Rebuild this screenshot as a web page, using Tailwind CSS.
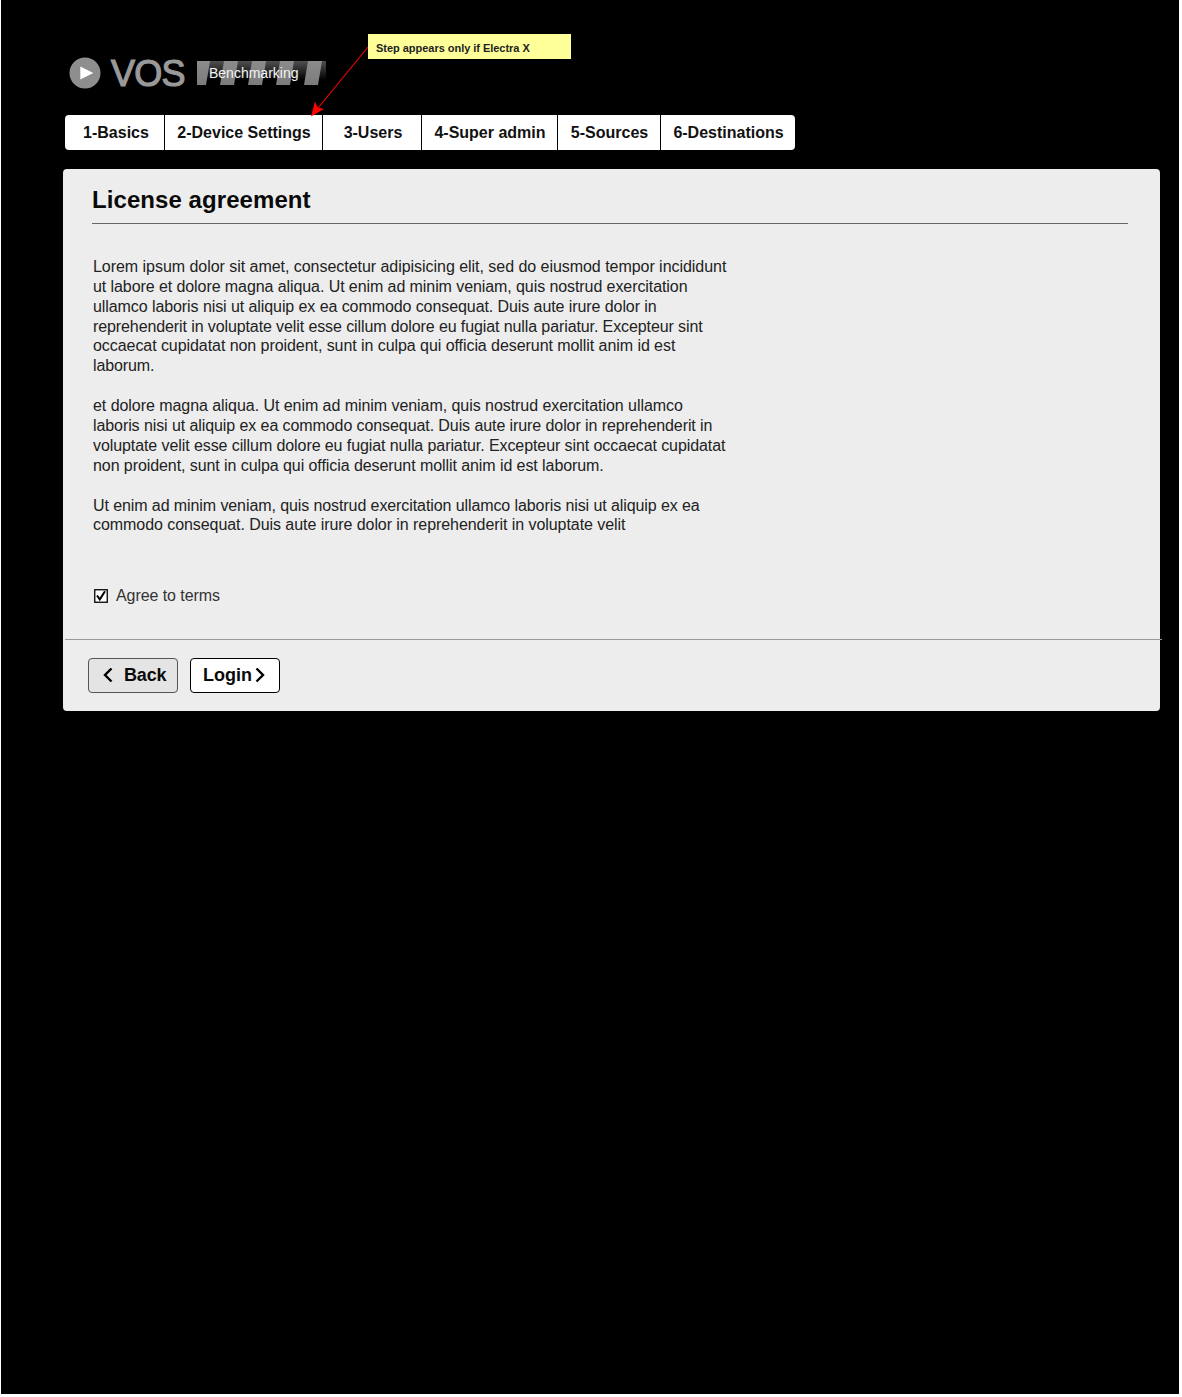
<!DOCTYPE html>
<html lang="en">
<head>
<meta charset="utf-8">
<title>VOS Benchmarking</title>
<script src="https://cdn.jsdelivr.net/npm/@tailwindcss/browser@4"></script>
</head>
<body class="bg-white font-['Liberation_Sans',Arial,sans-serif]">
<div class="relative ml-px h-[1394px] w-[1178px] bg-black pl-[62px] pt-[57px]">
  <header class="flex h-8 items-center pl-[6px]">
    <svg class="size-8" viewBox="0 0 32 32"><circle cx="16" cy="16" r="15.5" fill="#8e8e8e"/><path d="M11.3 9.4v13.2l13-6.6z" fill="#fff"/></svg>
    <div class="ml-[10px] w-[86px] pt-[2px] text-[36px] leading-8 tracking-[-0.8px] text-[#999] [-webkit-text-stroke:1.2px_#999]">VOS</div>
    <div class="relative h-6 w-[129px]">
      <svg class="absolute inset-0" width="129" height="24" viewBox="0 0 129 24">
        <defs><linearGradient id="bg" x1="0" y1="0" x2="0" y2="1"><stop offset="0" stop-color="#505050"/><stop offset=".8" stop-color="#000"/></linearGradient>
        <linearGradient id="st" x1="0" y1="0" x2="0" y2="1"><stop offset="0" stop-color="#8c8c8c"/><stop offset="1" stop-color="#7b7b7b"/></linearGradient></defs>
        <rect width="129" height="24" fill="url(#bg)"/>
        <g fill="url(#st)"><path d="M0 0h13L9 24H0z"/><path d="M27 0h14l-4 24H23z"/><path d="M55 0h14l-4 24H51z"/><path d="M83 0h14l-4 24H79z"/><path d="M111 0h14l-4 24h-14z"/></g>
      </svg>
      <span class="absolute left-3 top-0 text-[14px] leading-6 text-[#f4f4f4]">Benchmarking</span>
    </div>
  </header>

  <nav class="ml-[2px] mt-[26px] flex h-[35px] w-[730px] gap-px overflow-hidden rounded bg-black text-center text-[16px] font-bold leading-[35px] text-[#111] whitespace-nowrap">
    <a class="w-[99px] bg-white pl-[3px]">1-Basics</a>
    <a class="w-[157px] bg-white pl-px">2-Device Settings</a>
    <a class="w-[98px] bg-white pl-[2px]">3-Users</a>
    <a class="w-[135px] bg-white pl-px">4-Super admin</a>
    <a class="w-[102px] bg-white pl-px">5-Sources</a>
    <a class="w-[134px] bg-white pl-px">6-Destinations</a>
  </nav>

  <main class="mt-[19px] h-[542px] w-[1097px] rounded bg-[#ededed]">
    <h1 class="ml-[29px] h-[55px] w-[1036px] border-b border-[#666] pt-4 text-[24px] font-bold leading-[30px] tracking-[0.07px] text-[#0a0a0a]">License agreement</h1>
    <div class="ml-[30px] flex h-[362px] flex-col gap-[20.1px] pt-[33px] text-[16px] leading-[19.85px] text-[#222] whitespace-nowrap *:*:block">
      <p>
        <span class="tracking-[-0.038px]">Lorem ipsum dolor sit amet, consectetur adipisicing elit, sed do eiusmod tempor incididunt</span>
        <span class="tracking-[-0.08px]">ut labore et dolore magna aliqua. Ut enim ad minim veniam, quis nostrud exercitation</span>
        <span class="tracking-[-0.08px]">ullamco laboris nisi ut aliquip ex ea commodo consequat. Duis aute irure dolor in</span>
        <span class="tracking-[-0.103px]">reprehenderit in voluptate velit esse cillum dolore eu fugiat nulla pariatur. Excepteur sint</span>
        <span class="tracking-[-0.062px]">occaecat cupidatat non proident, sunt in culpa qui officia deserunt mollit anim id est</span>
        <span class="tracking-[-0.12px]">laborum.</span>
      </p>
      <p>
        <span class="tracking-[-0.052px]">et dolore magna aliqua. Ut enim ad minim veniam, quis nostrud exercitation ullamco</span>
        <span class="tracking-[-0.085px]">laboris nisi ut aliquip ex ea commodo consequat. Duis aute irure dolor in reprehenderit in</span>
        <span class="tracking-[-0.085px]">voluptate velit esse cillum dolore eu fugiat nulla pariatur. Excepteur sint occaecat cupidatat</span>
        <span class="tracking-[-0.075px]">non proident, sunt in culpa qui officia deserunt mollit anim id est laborum.</span>
      </p>
      <p>
        <span class="tracking-[-0.09px]">Ut enim ad minim veniam, quis nostrud exercitation ullamco laboris nisi ut aliquip ex ea</span>
        <span class="tracking-[-0.063px]">commodo consequat. Duis aute irure dolor in reprehenderit in voluptate velit</span>
      </p>
    </div>
    <label class="ml-[31px] flex h-5 items-center gap-2 text-[16px] leading-5 tracking-[-0.07px] text-[#333]">
      <svg width="14" height="14" viewBox="0 0 14 14"><rect x=".75" y=".75" width="12.5" height="12.5" fill="#fff" stroke="#000" stroke-width="1.3"/><path d="M3 6.5 5.800 10.400 11 2.300" fill="none" stroke="#000" stroke-width="2"/></svg>
      Agree to terms
    </label>
    <div class="ml-[2px] mt-[33px] h-px w-[1097px] bg-[#999]"></div>
    <div class="ml-[25px] mt-[18px] flex gap-3 text-[18px] font-bold text-[#0a0a0a]">
      <button class="flex h-[35px] w-[90px] items-center rounded border border-[#555] bg-[#e4e4e4] pl-[14px]"><svg class="mr-[11px]" width="10" height="15" viewBox="0 0 10 15"><path d="M8.5 .500 2 7 8.500 13.500" fill="none" stroke="#000" stroke-width="2.4"/></svg><span class="tracking-[-0.15px]">Back</span></button>
      <button class="flex h-[35px] w-[90px] items-center rounded border border-black bg-white pl-[12px]">Login<svg class="ml-[3px]" width="10" height="15" viewBox="0 0 10 15"><path d="M1.500 .500 8 7 1.500 13.500" fill="none" stroke="#000" stroke-width="2.4"/></svg></button>
    </div>
  </main>

  <svg class="absolute left-[299px] top-[34px]" width="80" height="90" viewBox="300 34 80 90"><path d="M368 47 318 108" stroke="#f00" stroke-width="1.1"/><path d="M311 116.500 315 101.500 317.800 107.500 324 109z" fill="#f00"/></svg>
  <div class="absolute left-[367px] top-[34px] h-[25px] w-[203px] bg-[#ffff99] pl-2 text-[11px] font-bold leading-[28px] tracking-[-0.03px] text-[#222]">Step appears only if Electra X</div>
</div>
</body>
</html>
